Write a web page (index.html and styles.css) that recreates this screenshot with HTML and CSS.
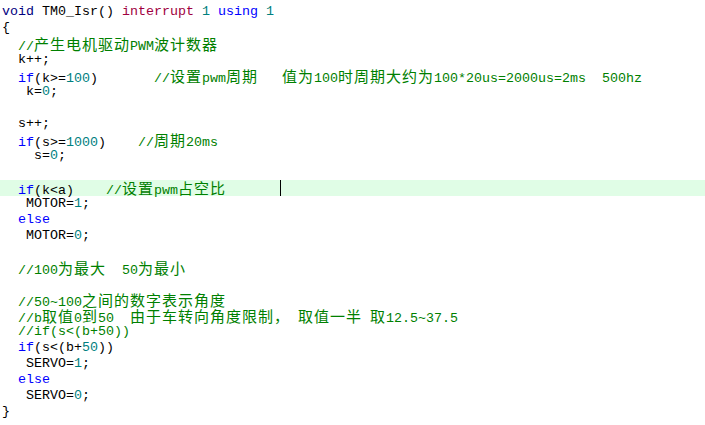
FILE: index.html
```html
<!DOCTYPE html>
<html>
<head>
<meta charset="utf-8">
<link rel="stylesheet" href="styles.css">
</head>
<body>
<div class="editor">
<div class="ln"><span class="ty">void</span> TM0_Isr() <span class="kw2">interrupt</span> <span class="num">1</span> <span class="kw">using</span> <span class="num">1</span></div>
<div class="ln">{</div>
<div class="ln">  <span class="cm">//<span class="zh">产生电机驱动</span>PWM<span class="zh">波计数器</span></span></div>
<div class="ln">  k++;</div>
<div class="ln">  <span class="kw">if</span>(k&gt;=<span class="num">100</span>)       <span class="cm">//<span class="zh">设置</span>pwm<span class="zh">周期</span>   <span class="zh">值为</span>100<span class="zh">时周期大约为</span>100*20us=2000us=2ms  500hz</span></div>
<div class="ln">   k=<span class="num">0</span>;</div>
<div class="ln"> </div>
<div class="ln">  s++;</div>
<div class="ln">  <span class="kw">if</span>(s&gt;=<span class="num">1000</span>)    <span class="cm">//<span class="zh">周期</span>20ms</span></div>
<div class="ln">    s=<span class="num">0</span>;</div>
<div class="ln"> </div>
<div class="ln cur">  <span class="kw">if</span>(k&lt;a)    <span class="cm">//<span class="zh">设置</span>pwm<span class="zh">占空比</span></span><span class="caret"></span></div>
<div class="ln">   MOTOR=<span class="num">1</span>;</div>
<div class="ln">  <span class="kw">else</span></div>
<div class="ln">   MOTOR=<span class="num">0</span>;</div>
<div class="ln"> </div>
<div class="ln">  <span class="cm">//100<span class="zh">为最大</span>  50<span class="zh">为最小</span></span></div>
<div class="ln"> </div>
<div class="ln">  <span class="cm">//50~100<span class="zh">之间的数字表示角度</span></span></div>
<div class="ln">  <span class="cm">//b<span class="zh">取值</span>0<span class="zh">到</span>50  <span class="zh">由于车转向角度限制，</span> <span class="zh">取值一半</span> <span class="zh">取</span>12.5~37.5</span></div>
<div class="ln">  <span class="cm">//if(s&lt;(b+50))</span></div>
<div class="ln">  <span class="kw">if</span>(s&lt;(b+<span class="num">50</span>))</div>
<div class="ln">   SERVO=<span class="num">1</span>;</div>
<div class="ln">  <span class="kw">else</span></div>
<div class="ln">   SERVO=<span class="num">0</span>;</div>
<div class="ln">}</div>
</div>
</body>
</html>
```
FILE: styles.css
```css
html, body {
  margin: 0;
  background: #ffffff;
}
.editor {
  padding-top: 4px;
  font-family: "Liberation Mono", monospace;
  font-size: 13.333px;
  color: #000000;
}
.ln {
  position: relative;
  height: 16px;
  line-height: 16px;
  white-space: pre;
  padding-left: 2px;
}
.ln.cur {
  background: #e0fde6;
}
.kw { color: #0000ff; }
.ty { color: #000080; }
.kw2 { color: #a00040; }
.num { color: #008080; }
.cm { color: #008000; }
.zh {
  font-family: "Noto Sans CJK SC", sans-serif;
  font-size: 15px;
  letter-spacing: 1px;
  line-height: 16px;
}
.caret {
  position: absolute;
  left: 280px;
  top: 0;
  width: 1px;
  height: 16px;
  background: #000000;
}
```
